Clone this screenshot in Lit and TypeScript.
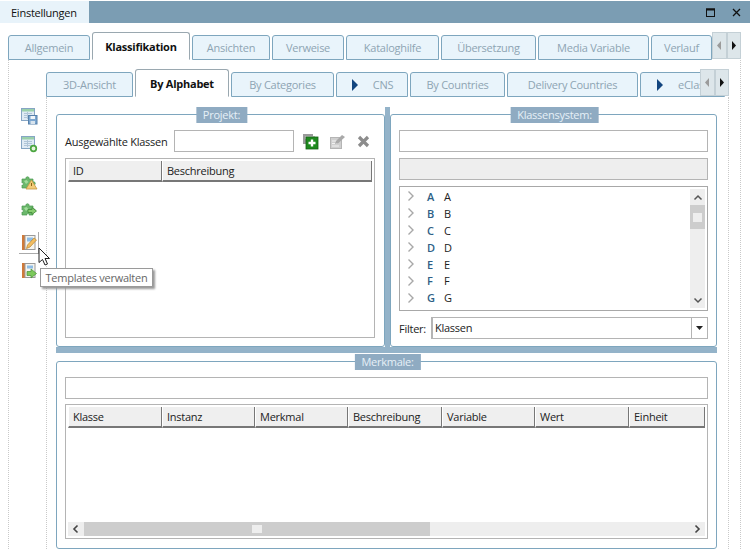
import { LitElement, html, css, svg } from "lit";
import { customElement } from "lit/decorators.js";
import { styleMap } from "lit/directives/style-map.js";

const wrap = (w: number, h: number, c: unknown) =>
  html`<svg width=${w} height=${h} viewBox="0 0 ${w} ${h}">${c}</svg>`;

const doc = svg`<rect x="1.5" y="1.5" width="13" height="12" fill="#dfeaf4" stroke="#86a5c4"/><rect x="2" y="2" width="12" height="2.5" fill="#9ad0aa"/><path d="M4 6.5h8M4 8.5h8M4 10.5h8M7.5 5v7" stroke="#b0c5d8"/>`;
const puzzle = svg`<path d="M2 7h4c-1-3 4-3 3 0h4v3c3-1 3 4 0 3v3H9c1-2-3-2-2 0H2v-3c2 1 2-3 0-2z" fill="#6cb86c" stroke="#4b9a50" stroke-width=".7"/><path d="M4 9l2.500-1 2 2-2.500 2z" fill="#a2dc9c"/>`;
const book = svg`<rect x="2" y="1" width="3" height="15" fill="#cf7a3a"/><rect x="5" y="1.5" width="10" height="14" fill="#f5f4ee" stroke="#9a9a9a"/>`;

const icons = {
  save: wrap(18, 18, svg`${doc}<rect x="8.5" y="8.5" width="8.5" height="8.5" fill="#7ba6d0" stroke="#5680aa"/><rect x="10.5" y="9" width="4.5" height="3" fill="#f0f5fa"/><rect x="10.5" y="14" width="4.5" height="3" fill="#d8e4ee"/>`),
  tableAdd: wrap(18, 18, svg`${doc}<circle cx="13.5" cy="13.5" r="2.800" fill="#e4f3dc" stroke="#4aa53f" stroke-width="1.700"/>`),
  puzzleWarn: wrap(18, 18, svg`${puzzle}<path d="M11.5 8l5.500 9h-11z" fill="#f2cb78" stroke="#c49540" stroke-width=".8"/><path d="M11.5 11v3" stroke="#8a6518"/>`),
  puzzleGo: wrap(18, 18, svg`${puzzle}<path d="M8 10.5h4V8.500l4.500 3.500-4.500 3.500v-2H8z" fill="#86cc6f" stroke="#408a38" stroke-width=".8"/>`),
  bookEdit: wrap(18, 18, svg`${book}<rect x="7" y="3.5" width="6" height="4" fill="#8dbce6"/><path d="M6.500 14.500l1-3.500 6.500-7 2.500 2-6.500 7z" fill="#f2bd60" stroke="#b8822d" stroke-width=".7"/>`),
  bookGo: wrap(18, 18, svg`${book}<rect x="7" y="3.5" width="6" height="3" fill="#8dbce6"/><path d="M7 9.500h4V7l5.500 4.500L11 16v-2.500H7z" fill="#7cc85b" stroke="#458f33" stroke-width=".7"/>`),
  add: wrap(17, 17, svg`<rect x="1" y="1" width="10" height="10" fill="#9a9a9a"/><rect x="3" y="3" width="10" height="3" fill="#c3c3c3"/><rect x="4" y="4" width="12" height="12" fill="#1e8a1e" stroke="#145f14" stroke-width=".8"/><path d="M10 6.500v7M6.500 10h7" stroke="#fff" stroke-width="2.400"/>`),
  edit: wrap(17, 17, svg`<rect x="1.5" y="4.5" width="11" height="11" fill="#cfcfcf" stroke="#b5b5b5"/><path d="M3 8h5M3 10.500h5M3 13h7" stroke="#f1f1f1"/><path d="M6 11l1-3 6-6 3 2-6.500 6z" fill="#a9a9a9"/>`),
  del: wrap(15, 15, svg`<path d="M3 3l9 9M12 3l-9 9" stroke="#8c8c8c" stroke-width="3.200"/>`),
  right: wrap(8, 12, svg`<path d="M1.500 1.500L6 6l-4.500 4.500" fill="none" stroke="#a8a8a8" stroke-width="1.400"/>`),
  up: wrap(10, 7, svg`<path d="M1.500 5.500L5 2l3.500 3.500" fill="none" stroke="#555" stroke-width="1.500"/>`),
  down: wrap(10, 7, svg`<path d="M1.500 1.500L5 5l3.500-3.500" fill="none" stroke="#555" stroke-width="1.500"/>`),
  sleft: wrap(8, 10, svg`<path d="M5.500 1.500L2 5l3.500 3.500" fill="none" stroke="#444" stroke-width="1.600"/>`),
  sright: wrap(8, 10, svg`<path d="M2.500 1.500L6 5 2.500 8.500" fill="none" stroke="#444" stroke-width="1.600"/>`),
  play: wrap(8, 12, svg`<path d="M1 0l6 6-6 6z" fill="#12457f"/>`),
  maxi: wrap(11, 11, svg`<rect x="1.500" y="2" width="8" height="7.500" fill="none" stroke="#111" stroke-width="1"/><path d="M1 2.500h9" stroke="#111" stroke-width="2"/>`),
  close: wrap(11, 11, svg`<path d="M2 2l7 7M9 2l-7 7" stroke="#111" stroke-width="1.300"/>`),
  cursor: wrap(14, 20, svg`<path d="M1 1v14.500l3.500-3 2.500 5.500 2.500-1-2.500-5.500h4.500z" fill="#fff" stroke="#222" stroke-width="1"/>`),
  pageL: wrap(6, 9, svg`<path d="M5 0v9L1 4.500z" fill="#9b9b9b"/>`),
  pageR: wrap(6, 9, svg`<path d="M1 0v9l4-4.500z" fill="#111"/>`),
  caret: wrap(7, 4, svg`<path d="M0 0h7L3.500 4z" fill="#222"/>`),
};

type Tab = { t: string; w: number; active?: boolean; play?: boolean };
const topTabs: Tab[] = [
  { t: "Allgemein", w: 82 }, { t: "Klassifikation", w: 98, active: true }, { t: "Ansichten", w: 78 },
  { t: "Verweise", w: 72 }, { t: "Kataloghilfe", w: 93 }, { t: "Übersetzung", w: 95 },
  { t: "Media Variable", w: 111 }, { t: "Verlauf", w: 61 },
];
const subTabs: Tab[] = [
  { t: "3D-Ansicht", w: 87 }, { t: "By Alphabet", w: 94, active: true }, { t: "By Categories", w: 103 },
  { t: "CNS", w: 72, play: true }, { t: "By Countries", w: 95 }, { t: "Delivery Countries", w: 131 },
  { t: "eClass", w: 85, play: true },
];

@customElement("app-root")
export class AppRoot extends LitElement {
  static styles = css`
    :host { display: block; position: relative; width: 750px; height: 549px; overflow: hidden; background: #fff;
      font-family: "Open Sans", "Noto Sans", sans-serif; font-size: 11px; letter-spacing: -0.25px; color: #222; }
    svg { display: block; }
    .title { display: flex; margin-top: 1px; height: 22px; }
    .title-tab { width: 89px; background: #e8f3fa; color: #111; display: flex; align-items: center; padding-left: 11px; box-sizing: border-box; }
    .title-bar { flex: 1; background: #7b9db3; display: flex; justify-content: flex-end; align-items: center; gap: 15px; padding-right: 8px; }
    .top { padding: 9px 9px 0 8px; }
    .tabstrip { display: flex; align-items: flex-end; position: relative; height: 28px; gap: 2px; overflow: hidden; }
    .tab { flex: none; box-sizing: border-box; height: 25px; display: flex; align-items: center; justify-content: center; gap: 14px; background: #e9f4fb;
      border: 1px solid #7ea6be; border-radius: 3px 3px 0 0; color: #8ea4b3; white-space: nowrap; }
    .tab.active { height: 28px; background: #fff; color: #111; font-weight: 700; border-color: #9aa8b0; border-bottom-color: #fff; }
    .pager { position: absolute; right: 0; top: 0; height: 27px; display: flex; background: #dde6ea; }
    .pager span { width: 14.5px; box-sizing: border-box; display: flex; align-items: center; justify-content: center; border: 1px solid #c4d0d6; }
    .panel { display: flex; height: 489px; margin: 0 9px 0 8px; border-left: 1px dotted #c9c9c9; border-right: 1px dotted #c9c9c9; }
    .tools { width: 37px; flex: none; padding: 47px 0 0 11px; box-sizing: border-box; display: flex; flex-direction: column; }
    .tool { width: 18px; height: 18px; margin-bottom: 10px; }
    .tool.gap-a { margin-bottom: 19px; }
    .tool.gap-b { margin-bottom: 9px; }
    .tool.gap-c { margin-bottom: 17px; }
    .tool.sel { position: relative; }
    .tool.sel::after { content: ""; position: absolute; left: -1px; top: -2px; width: 19px; height: 21px; border-right: 1px solid #aaa; border-bottom: 1px solid #aaa; }
    .inner { flex: 1; min-width: 0; padding-top: 9px; margin-right: 11px; display: flex; flex-direction: column; }
    .content { flex: 1; padding: 17px 10px 0 9px; border-left: 1px dotted #c9c9c9; border-right: 1px dotted #c9c9c9; }
    .split { display: grid; grid-template-columns: 329px 327px; column-gap: 5px; height: 233px; position: relative; }
    .split::before { content: ""; position: absolute; left: 329px; width: 5px; top: -7px; bottom: 0; background: #94b3c9; }
    .hbar { height: 6px; width: 661px; background: #94b3c9; margin-bottom: 8px; }
    .group { position: relative; box-sizing: border-box; border: 1px solid #7ea6be; border-radius: 3px; padding: 15px 8px 0; background: #fff; }
    .legend { position: absolute; top: -8px; left: 50%; transform: translateX(-50%); margin-left: 1px; height: 16px; padding: 0 7px 1px; box-sizing: border-box; background: #8fabc2; color: #e6f0f7; display: flex; align-items: center; white-space: nowrap; }
    .g3 { height: 188px; width: 661px; }
    .field { box-sizing: border-box; height: 22px; border: 1px solid #b4b4b4; background: #fff; }
    .field.grey { background: #eeeeee; margin-top: 6px; }
    .row { display: flex; align-items: center; }
    .row .label { width: 109px; white-space: nowrap; }
    .row .field { width: 120px; }
    .row .acts { display: flex; align-items: center; margin-left: 8px; gap: 10px; }
    .table { box-sizing: border-box; border: 1px solid #b4b4b4; padding: 2px; display: flex; flex-direction: column; }
    .g1 .table { height: 180px; margin-top: 6px; width: 310px; }
    .g3 .table { height: 135px; margin-top: 5px; }
    .thead { display: flex; height: 21px; flex: none; }
    .th { flex: none; box-sizing: border-box; background: #efefef; border-left: 1px solid #fff; border-right: 1px solid #777; border-bottom: 2px solid #777; padding: 0 0 0 4px; display: flex; align-items: center; color: #222; }
    .tbody { flex: 1; }
    .hscroll { display: flex; height: 14px; background: #eeeeee; align-items: center; }
    .hscroll .arrow { width: 16px; display: flex; justify-content: center; flex: none; }
    .hscroll .track { width: 346px; height: 14px; background: #cdcdcd; display: flex; align-items: center; padding-left: 168px; box-sizing: border-box; flex: none; }
    .hscroll .thumb { width: 10px; height: 8px; background: #eeeeee; }
    .hscroll .fill { flex: 1; }
    .tree { box-sizing: border-box; height: 125px; margin-top: 6px; border: 1px solid #a8a8a8; display: flex; }
    .tree-list { flex: 1; padding-top: 1px; }
    .node { height: 16.9px; display: flex; align-items: center; padding-left: 7px; }
    .node .code { margin-left: 12px; width: 17px; color: #2e5f86; font-weight: 600; }
    .vscroll { width: 15px; margin: 2px 2px 2px 0; background: #eeeeee; display: flex; flex-direction: column; align-items: center; }
    .vscroll .cap { height: 16px; display: flex; align-items: center; justify-content: center; flex: none; }
    .vscroll .track { width: 15px; height: 24px; background: #cdcdcd; display: flex; align-items: center; justify-content: center; flex: none; }
    .vscroll .thumb { width: 9px; height: 9px; background: #eeeeee; }
    .vscroll .grow { flex: 1; }
    .filter { display: flex; align-items: center; margin-top: 6px; }
    .filter .label { width: 32px; }
    .combo { flex: 1; box-sizing: border-box; height: 22px; border: 1px solid #b4b4b4; border-left-width: 2px; display: flex; align-items: center; padding-left: 2px; }
    .combo .txt { flex: 1; padding-bottom: 1px; }
    .combo .btn { width: 15px; height: 100%; border-left: 1px solid #b4b4b4; display: flex; align-items: center; justify-content: center; }
    .tip { position: absolute; left: 40px; top: 268px; width: 113px; height: 19px; box-sizing: border-box; background: #fff; border: 1px solid #9a9a9a; box-shadow: 2px 2px 2px #999; color: #666; display: flex; align-items: center; justify-content: center; white-space: nowrap; }
    .cursor { position: absolute; left: 38px; top: 247px; }
  `;

  private tabs(list: Tab[]) {
    return list.map((x) => html`<div class="tab ${x.active ? "active" : ""}" style=${styleMap({ width: x.w + "px" })}>
      ${x.play ? icons.play : ""}<span>${x.t}</span></div>`);
  }

  private table(cols: [string, number][]) {
    return html`<div class="thead">${cols.map(([t, w]) => html`<div class="th" style=${styleMap({ width: w + "px" })}>${t}</div>`)}</div>`;
  }

  render() {
    const letters = ["A", "B", "C", "D", "E", "F", "G"];
    return html`
      <div class="title">
        <div class="title-tab">Einstellungen</div>
        <div class="title-bar">${icons.maxi}${icons.close}</div>
      </div>
      <div class="top">
        <div class="tabstrip">
          ${this.tabs(topTabs)}
          <div class="pager"><span>${icons.pageL}</span><span>${icons.pageR}</span></div>
        </div>
      </div>
      <div class="panel">
        <div class="tools">
          <div class="tool">${icons.save}</div>
          <div class="tool gap-a">${icons.tableAdd}</div>
          <div class="tool gap-b">${icons.puzzleWarn}</div>
          <div class="tool gap-c">${icons.puzzleGo}</div>
          <div class="tool sel">${icons.bookEdit}</div>
          <div class="tool">${icons.bookGo}</div>
        </div>
        <div class="inner">
          <div class="tabstrip">
            ${this.tabs(subTabs)}
            <div class="pager"><span>${icons.pageL}</span><span>${icons.pageR}</span></div>
          </div>
          <div class="content">
            <div class="split">
              <div class="group g1">
                <div class="legend">Projekt:</div>
                <div class="row">
                  <div class="label">Ausgewählte Klassen</div>
                  <div class="field"></div>
                  <div class="acts">${icons.add}${icons.edit}${icons.del}</div>
                </div>
                <div class="table">
                  ${this.table([["ID", 94], ["Beschreibung", 210]])}
                  <div class="tbody"></div>
                </div>
              </div>
              <div class="group g2">
                <div class="legend">Klassensystem:</div>
                <div class="field"></div>
                <div class="field grey"></div>
                <div class="tree">
                  <div class="tree-list">
                    ${letters.map((l) => html`<div class="node">${icons.right}<span class="code">${l}</span><span>${l}</span></div>`)}
                  </div>
                  <div class="vscroll">
                    <div class="cap">${icons.up}</div>
                    <div class="track"><div class="thumb"></div></div>
                    <div class="grow"></div>
                    <div class="cap">${icons.down}</div>
                  </div>
                </div>
                <div class="filter">
                  <div class="label">Filter:</div>
                  <div class="combo"><span class="txt">Klassen</span><span class="btn">${icons.caret}</span></div>
                </div>
              </div>
            </div>
            <div class="hbar"></div>
            <div class="group g3">
              <div class="legend">Merkmale:</div>
              <div class="field"></div>
              <div class="table">
                ${this.table([["Klasse", 94], ["Instanz", 93], ["Merkmal", 93], ["Beschreibung", 94], ["Variable", 93], ["Wert", 94], ["Einheit", 76]])}
                <div class="tbody"></div>
                <div class="hscroll">
                  <span class="arrow">${icons.sleft}</span>
                  <div class="track"><div class="thumb"></div></div>
                  <div class="fill"></div>
                  <span class="arrow">${icons.sright}</span>
                </div>
              </div>
            </div>
          </div>
        </div>
      </div>
      <div class="cursor">${icons.cursor}</div>
      <div class="tip">Templates verwalten</div>
    `;
  }
}
